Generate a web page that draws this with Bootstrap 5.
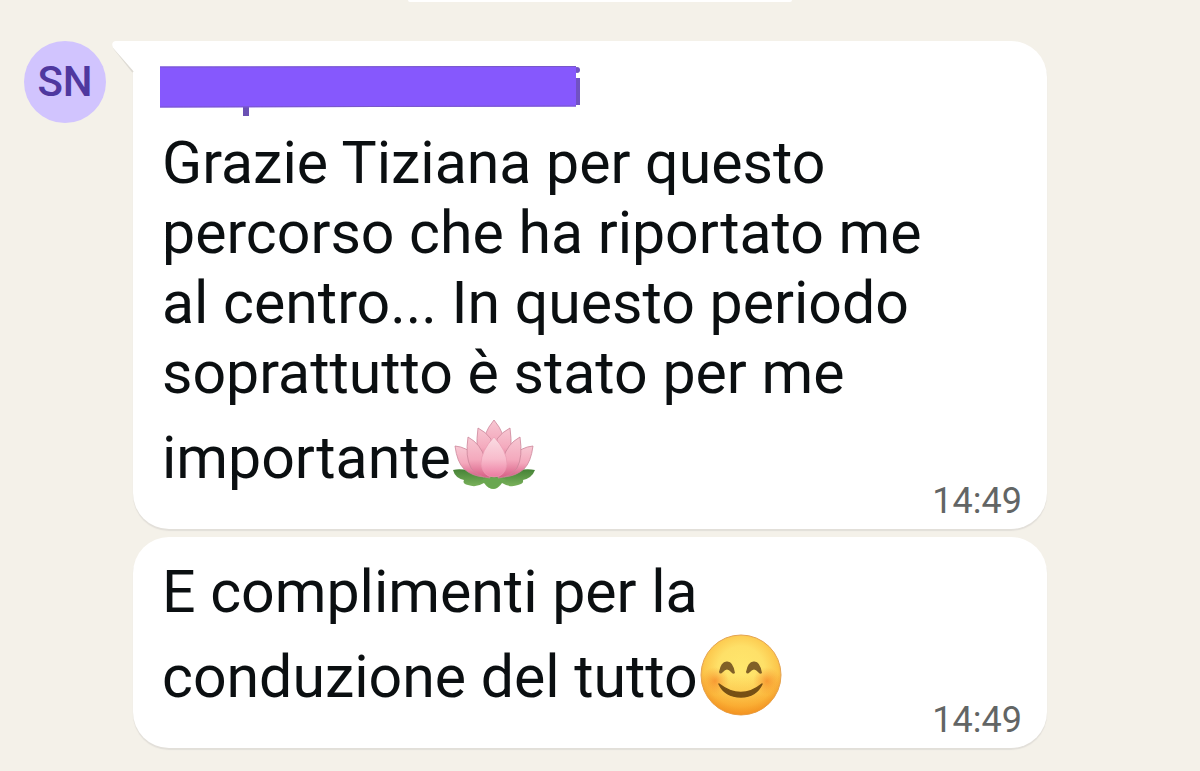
<!DOCTYPE html>
<html lang="it">
<head>
<meta charset="utf-8">
<meta name="viewport" content="width=device-width, initial-scale=1">
<title>Chat</title>
<link href="https://cdn.jsdelivr.net/npm/bootstrap@5.3.0/dist/css/bootstrap.min.css" rel="stylesheet">
<style>
body{background:#f4f1e9;font-family:Roboto,sans-serif;color:#0b0f11}
.previous-edge{width:32%;height:2px;border-radius:0 0 16px 16px}
.chat-thread{padding:39px 24px 24px;gap:27px}
.avatar{width:82px;height:82px;background:#d1c4fe;color:#4f389f;font-size:42px;line-height:48px;font-weight:500}
.messages{gap:8px;max-width:914px;min-width:0}
.bubble{border-radius:36px;box-shadow:0 2px 1px #e2dfd9;padding:20px 25px 0 27px}
.bubble-first{border-top-left-radius:0;padding-top:24px}
.tail{top:0;left:-22px;width:25px;height:34px}
.sender{width:424px;height:52px;margin-bottom:11px}
.message-text{font-size:59px;line-height:70px;padding:0 0 30px 2px;min-width:0}
.emoji{width:84px;height:84px;margin:7px 0 0 1px;vertical-align:-21px}
.message-time{font-size:36px;line-height:42px;color:#626565;padding-bottom:7px}
</style>
</head>
<body>
<div class="previous-edge bg-white mx-auto"></div>
<main class="chat-thread d-flex align-items-start">
  <div class="avatar rounded-circle d-flex align-items-center justify-content-center flex-shrink-0">SN</div>
  <div class="messages d-flex flex-column flex-grow-1">
    <article class="bubble bubble-first bg-white position-relative">
      <svg class="tail position-absolute" viewBox="0 0 25 34" aria-hidden="true">
        <path d="M3 7 22 31" stroke="#dedbd4" stroke-width="2"/>
        <path d="M5 0H25V33L3 8C0 4 1 0 5 0Z" fill="#fff"/>
      </svg>
      <svg class="sender d-block" viewBox="0 0 424 52" role="img" aria-label="Nome nascosto">
        <path d="M83 40H89V51H83Z" fill="#6b51b4"/>
        <path d="M415 13H420V40H415Z" fill="#7152c3"/>
        <circle cx="417" cy="5" r="3" fill="#7152c3"/>
        <path d="M0 1.5 416 1V41.5L0 42.5Z" fill="#8658fd"/>
        <path d="M0 2 416 1.5M0 42 416 41" stroke="#7858c8" fill="none"/>
      </svg>
      <div class="d-flex align-items-end justify-content-between">
        <p class="message-text mb-0">Grazie Tiziana per questo percorso che ha riportato me al centro... In questo periodo soprattutto è stato per me importante<svg class="emoji" viewBox="0 0 84 84" role="img" aria-label="Fiore di loto">
          <defs>
            <linearGradient id="petal" x1="0" y1="0" x2="0" y2="1"><stop stop-color="#f7c8d3"/><stop offset=".55" stop-color="#f4a9bd"/><stop offset="1" stop-color="#d75c84"/></linearGradient>
            <linearGradient id="center" x1="0" y1="0" x2="0" y2="1"><stop stop-color="#fadde3"/><stop offset=".55" stop-color="#f8bccc"/><stop offset="1" stop-color="#ec7ba1"/></linearGradient>
            <linearGradient id="leaf" x1="0" y1="0" x2="0" y2="1"><stop stop-color="#458236"/><stop offset="1" stop-color="#82b961"/></linearGradient>
          </defs>
          <path d="M1 55Q12 52 28 60L56 60Q70 52 83 55Q80 63 71 65Q72 69 66 70Q58 73 50 68Q47 73 42 74Q36 74 32 68Q24 73 16 70Q10 69 12 65Q3 63 1 55Z" fill="url(#leaf)"/>
          <path d="M29 66Q34 61 42 63Q50 61 55 66Q48 67 45 73Q40 75 36 72Q35 68 29 66Z" fill="#69a750"/>
          <g fill="url(#petal)" stroke="#cc879b" stroke-width=".8">
            <path d="M42 5Q48 12 51 20L50 44H34L33 20Q36 12 42 5Z"/>
            <path d="M26 13Q34 17 39 24L38 49H28Q23 35 26 13ZM58 13Q50 17 45 24L46 49H56Q61 35 58 13Z"/>
            <path d="M3 31Q15 32 22 41L32 62Q20 61 12 54Q5 47 3 31ZM81 31Q69 32 62 41L52 62Q64 61 72 54Q79 47 81 31Z"/>
            <path d="M16 22Q29 29 33 44L38 63Q25 62 19 53Q13 42 16 22ZM68 22Q55 29 51 44L46 63Q59 62 65 53Q71 42 68 22Z"/>
          </g>
          <path d="M42 22Q55 36 55 49Q53 62 42 62Q31 62 29 49Q29 36 42 22Z" fill="url(#center)" stroke="#e99bb2" stroke-width=".7"/>
        </svg></p>
        <time class="message-time flex-shrink-0" datetime="14:49">14:49</time>
      </div>
    </article>
    <article class="bubble bg-white">
      <div class="d-flex align-items-end justify-content-between">
        <p class="message-text mb-0">E complimenti per la conduzione del tutto<svg class="emoji" viewBox="0 0 84 84" role="img" aria-label="Faccina sorridente">
          <defs>
            <radialGradient id="face" cx=".5" cy=".43" r=".58"><stop stop-color="#ffe76d"/><stop offset=".5" stop-color="#fee068"/><stop offset=".8" stop-color="#fcc64b"/><stop offset="1" stop-color="#ed982f"/></radialGradient>
            <radialGradient id="cheek"><stop stop-color="#f57d20" stop-opacity=".65"/><stop offset="1" stop-color="#f78b24" stop-opacity="0"/></radialGradient>
            <linearGradient id="warmth" x1="0" y1="0" x2="0" y2="1"><stop offset=".5" stop-color="#f99516" stop-opacity="0"/><stop offset="1" stop-color="#f78d16" stop-opacity=".6"/></linearGradient>
          </defs>
          <circle cx="42" cy="41" r="40" fill="url(#face)" stroke="#e4a351"/>
          <circle cx="42" cy="41" r="40" fill="url(#warmth)"/>
          <circle cx="16" cy="47" r="14" fill="url(#cheek)"/><circle cx="68" cy="47" r="14" fill="url(#cheek)"/>
          <path d="M20 38Q22 27 28 27.500Q34 27 36 39Q34 41 32 38Q28 33 24 38Q21 41 20 38ZM47 38Q49 27 55 27.500Q61 27 63 39Q61 41 59 38Q55 33 51 38Q48 41 47 38Z" fill="#806027"/>
          <path d="M20 50Q42 67 63 50Q57 63 42 63Q26 63 20 50Z" fill="#765014" stroke="#765014" stroke-width="1.500" stroke-linejoin="round"/>
        </svg></p>
        <time class="message-time flex-shrink-0" datetime="14:49">14:49</time>
      </div>
    </article>
  </div>
</main>
<script src="https://cdn.jsdelivr.net/npm/bootstrap@5.3.0/dist/js/bootstrap.bundle.min.js"></script>
</body>
</html>
